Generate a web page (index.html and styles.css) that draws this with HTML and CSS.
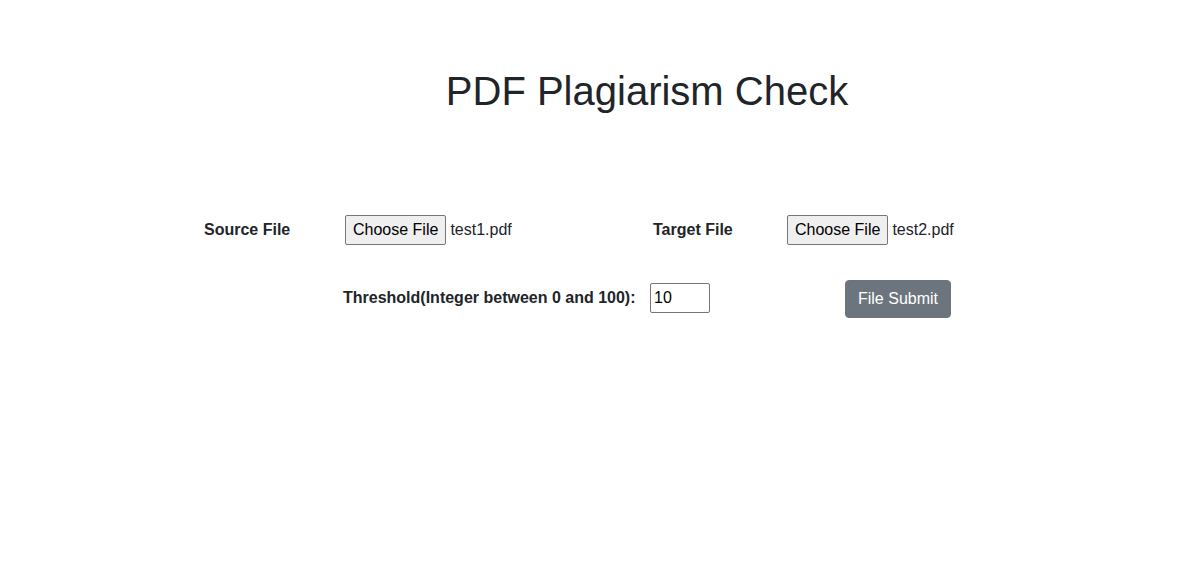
FILE: index.html
```html
<!DOCTYPE html>
<html>
<head>
<meta charset="utf-8">
<link rel="stylesheet" href="styles.css">
</head>
<body>
<div class="page">
  <h1 class="title">PDF Plagiarism Check</h1>
  <form class="form">
    <div class="row-files">
      <label class="lbl">Source File</label>
      <div class="file"><span class="choose">Choose File</span><span class="fname">test1.pdf</span></div>
      <label class="lbl">Target File</label>
      <div class="file"><span class="choose">Choose File</span><span class="fname">test2.pdf</span></div>
    </div>
    <div class="row-submit">
      <label class="lbl up">Threshold(Integer between 0 and 100):</label>
      <div class="up"><input class="num" type="text" value="10"></div>
      <div><button type="button" class="btn">File Submit</button></div>
    </div>
  </form>
</div>
</body>
</html>
```
FILE: styles.css
```css
html, body { margin: 0; padding: 0; background: #fff; }
body {
  font-family: "Liberation Sans", Arial, sans-serif;
  font-size: 16px;
  line-height: 1.5;
  color: #212529;
}
.page { width: 1198px; }
.title {
  margin: 0;
  padding: 67px 0 0 96px;
  text-align: center;
  font-size: 40px;
  font-weight: 400;
  line-height: 1.2;
}
.form { margin-top: 100px; }
.row-files {
  display: grid;
  grid-template-columns: 141px 308px 134px auto;
  align-items: center;
  padding-left: 204px;
  height: 30px;
}
.lbl { font-weight: 700; }
.file { display: flex; align-items: center; }
.choose {
  box-sizing: border-box;
  height: 30px;
  padding: 0 7px;
  display: inline-flex;
  align-items: center;
  background: #efefef;
  border: 1px solid #767676;
  border-radius: 2px;
  color: #000;
  font-size: 16px;
}
.fname { margin-left: 4px; }
.row-submit {
  display: grid;
  grid-template-columns: 307px 195px auto;
  align-items: center;
  padding-left: 343px;
  margin-top: 35px;
  height: 38px;
}
.up { padding-bottom: 2px; }
.num {
  box-sizing: border-box;
  width: 60px;
  height: 30px;
  padding: 1px 3px;
  border: 1px solid #767676;
  border-radius: 2px;
  font-family: "Liberation Sans", Arial, sans-serif;
  font-size: 16px;
  color: #000;
  display: block;
}
.btn {
  display: block;
  box-sizing: border-box;
  height: 38px;
  width: 106px;
  padding: 0;
  background: #6c757d;
  border: 1px solid #6c757d;
  border-radius: 4px;
  color: #fff;
  font-family: "Liberation Sans", Arial, sans-serif;
  font-size: 16px;
  line-height: 1.5;
}
```
